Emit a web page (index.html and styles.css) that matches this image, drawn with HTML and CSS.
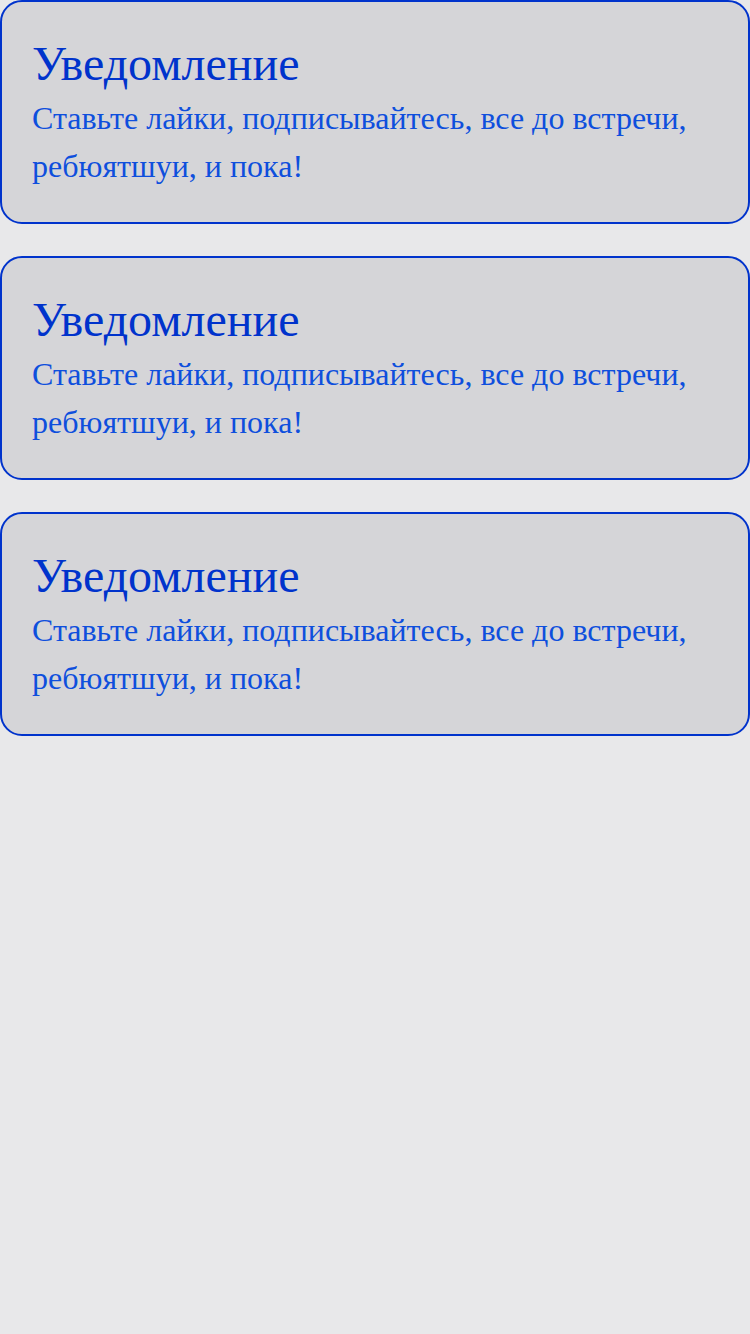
FILE: index.html
```html
<!DOCTYPE html>
<html lang="ru">
<head>
<meta charset="utf-8">
<link rel="stylesheet" href="styles.css">
</head>
<body>
<div class="list">
  <div class="card">
    <div class="title">Уведомление</div>
    <div class="text">Ставьте лайки, подписывайтесь, все до встречи, ребюятшуи, и пока!</div>
  </div>
  <div class="card">
    <div class="title">Уведомление</div>
    <div class="text">Ставьте лайки, подписывайтесь, все до встречи, ребюятшуи, и пока!</div>
  </div>
  <div class="card">
    <div class="title">Уведомление</div>
    <div class="text">Ставьте лайки, подписывайтесь, все до встречи, ребюятшуи, и пока!</div>
  </div>
</div>
</body>
</html>
```
FILE: styles.css
```css
html, body {
  margin: 0;
  padding: 0;
}
body {
  background: #e8e8ea;
  font-family: "Liberation Serif", "Times New Roman", serif;
  min-height: 1334px;
}
.list {
  display: flex;
  flex-direction: column;
  gap: 32px;
}
.card {
  background: #d5d5d8;
  border: 2px solid #0033cc;
  border-radius: 22px;
  padding: 32px 30px;
}
.title {
  color: #0033cc;
  font-size: 48px;
  line-height: 60px;
}
.text {
  color: #0e4fdd;
  font-size: 32px;
  line-height: 48px;
}
```
